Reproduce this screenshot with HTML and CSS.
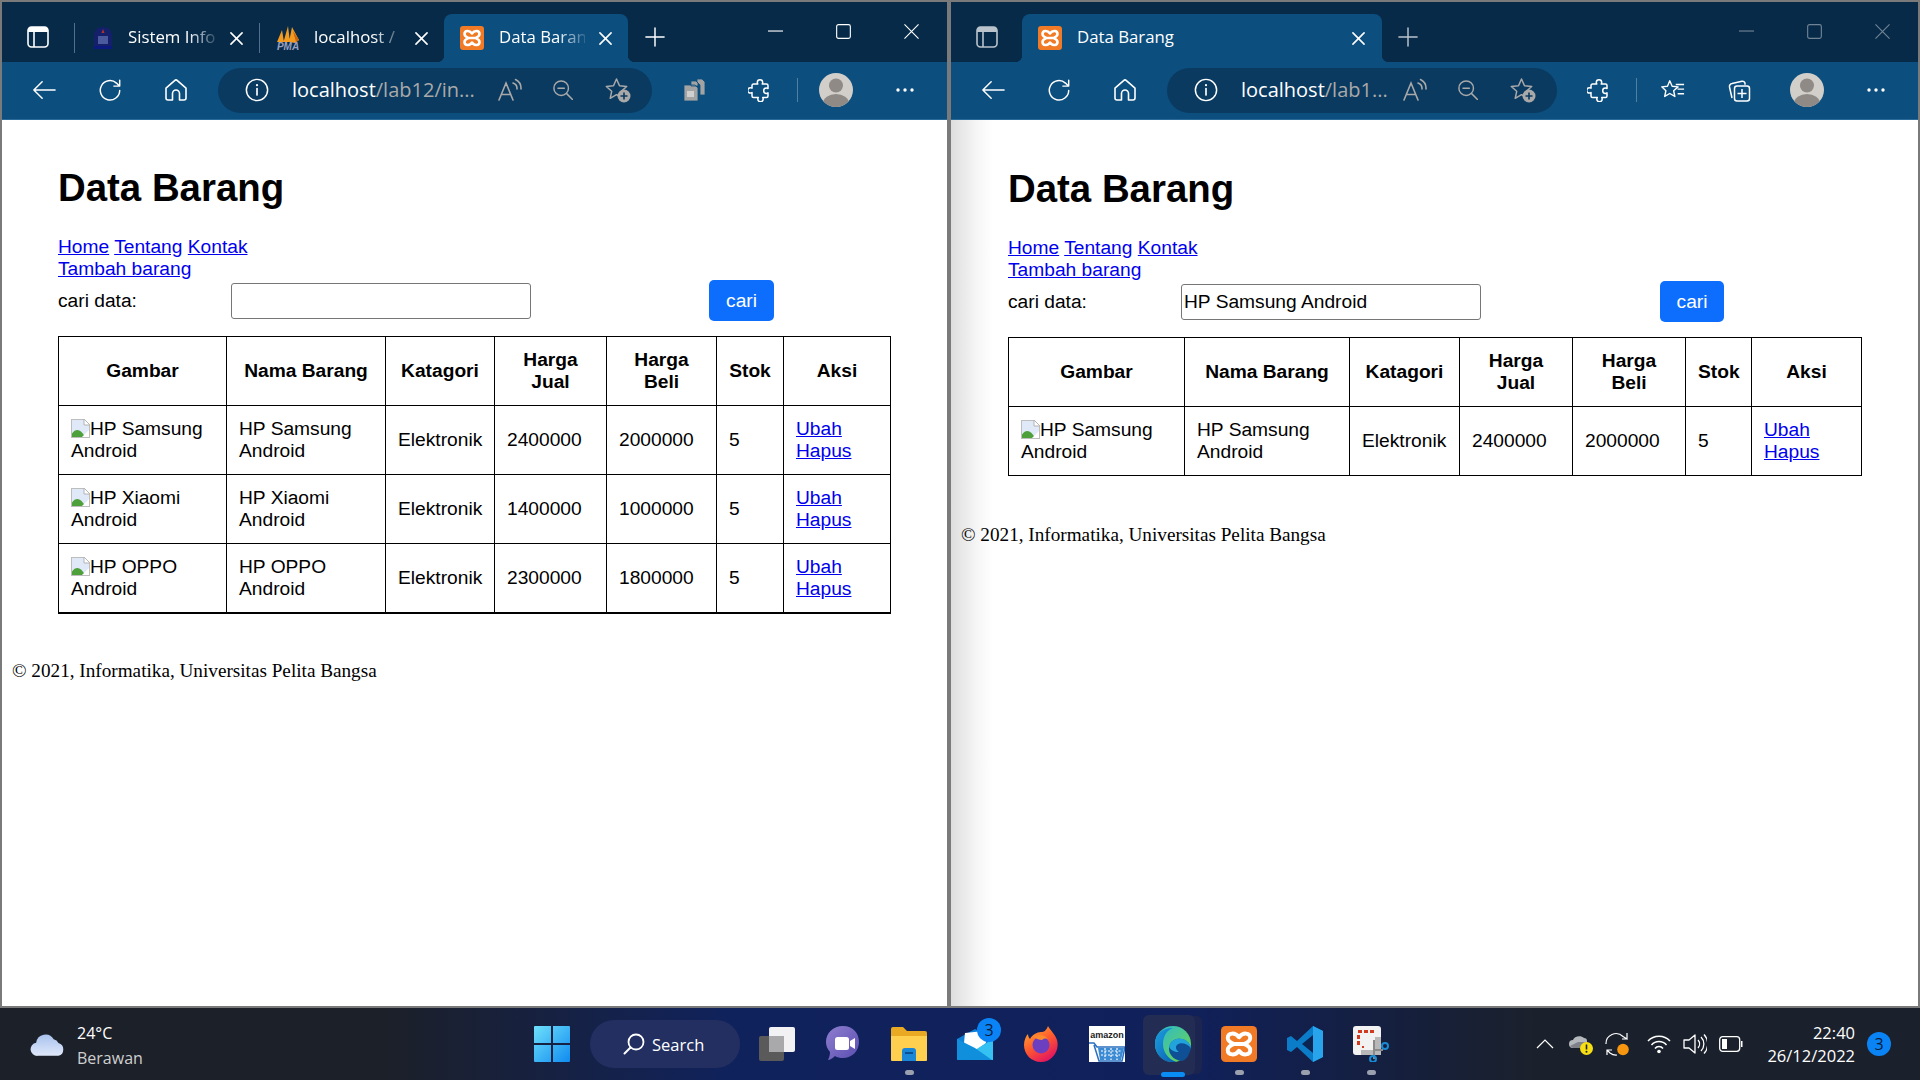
FILE: index.html
```html
<!DOCTYPE html>
<html lang="id">
<head>
<meta charset="utf-8">
<title>Data Barang</title>
<link rel="stylesheet" href="styles.css">
</head>
<body>
<svg class="sprite" aria-hidden="true">
  <symbol id="i-sidebar" viewBox="0 0 22 22"><rect x="1" y="1" width="20" height="20" rx="3.5" fill="none" stroke="currentColor" stroke-width="1.6"/><path d="M1 5a4 4 0 0 1 4-4h12a4 4 0 0 1 4 4v1H1z" fill="currentColor"/><path d="M7 6v15" stroke="currentColor" stroke-width="1.6"/></symbol>
  <symbol id="i-close" viewBox="0 0 14 14"><path d="M1 1l12 12M13 1L1 13" fill="none" stroke="currentColor" stroke-width="1.7" stroke-linecap="round"/></symbol>
  <symbol id="i-plus" viewBox="0 0 22 22"><path d="M11 1v20M1 11h20" fill="none" stroke="currentColor" stroke-width="1.6" stroke-linecap="round"/></symbol>
  <symbol id="i-back" viewBox="0 0 26 24"><path d="M25 12H2M11 3l-9 9 9 9" fill="none" stroke="currentColor" stroke-width="1.6" stroke-linecap="round" stroke-linejoin="round"/></symbol>
  <symbol id="i-reload" viewBox="0 0 26 26"><path d="M23.5 13.5A10.5 10.5 0 1 1 20 5.5L23 8.5M23.5 2.5v6.3h-6.3" fill="none" stroke="currentColor" stroke-width="1.6" stroke-linecap="round" stroke-linejoin="round"/></symbol>
  <symbol id="i-home" viewBox="0 0 24 24"><path d="M2 10.2 10.6 2.6a2 2 0 0 1 2.8 0L22 10.2V20a2 2 0 0 1-2 2h-4.500V15.500a3.500 3.500 0 0 0-7 0V22H4a2 2 0 0 1-2-2z" fill="none" stroke="currentColor" stroke-width="1.6" stroke-linejoin="round"/></symbol>
  <symbol id="i-info" viewBox="0 0 26 26"><circle cx="13" cy="13" r="11.500" fill="none" stroke="currentColor" stroke-width="1.600"/><path d="M13 11.500v7" stroke="currentColor" stroke-width="1.800" stroke-linecap="round"/><circle cx="13" cy="7.800" r="1.200" fill="currentColor"/></symbol>
  <symbol id="i-read" viewBox="0 0 24 24"><path d="M1 22 8 5l7 17M3.500 16.500h9M15 5a6 6 0 0 1 4 6M17.500 1.500A10 10 0 0 1 23 11" fill="none" stroke="currentColor" stroke-width="1.600" stroke-linecap="round"/></symbol>
  <symbol id="i-zoomout" viewBox="0 0 22 22"><circle cx="9" cy="9" r="8" fill="none" stroke="currentColor" stroke-width="1.600"/><path d="M5.500 9h7M15 15l6.500 6.500" fill="none" stroke="currentColor" stroke-width="1.600" stroke-linecap="round"/></symbol>
  <symbol id="i-favadd" viewBox="0 0 26 26"><path d="M11.500 2l3 6.800 7.200.7-5.400 4.800 1.500 7-6.300-3.600-6.300 3.600 1.500-7L1.300 9.500l7.200-.7z" fill="none" stroke="currentColor" stroke-width="1.500" stroke-linejoin="round"/><circle cx="19" cy="19" r="6.500" fill="currentColor"/><path d="M19 15.500v7M15.500 19h7" stroke="#0a3a60" stroke-width="1.600"/></symbol>
  <symbol id="i-puzzle" viewBox="0 0 24 24"><path d="M9.800 6c-.3-.6-.5-1-.5-1.600a2.700 2.700 0 0 1 5.400 0c0 .6-.2 1-.5 1.600h4.300A1.500 1.500 0 0 1 20 7.500v3c-.6-.3-1-.5-1.600-.5a2.700 2.700 0 0 0 0 5.400c.6 0 1-.2 1.600-.5v3a1.500 1.500 0 0 1-1.500 1.500h-3.800c.3.600.5 1 .5 1.600a2.700 2.700 0 0 1-5.400 0c0-.6.2-1 .5-1.600H5.500A1.500 1.500 0 0 1 4 17.900v-3.300c-.6.3-1 .5-1.600.5a2.700 2.700 0 0 1 0-5.400c.6 0 1 .2 1.600.5V7.500A1.500 1.500 0 0 1 5.500 6z" fill="none" stroke="currentColor" stroke-width="1.500" stroke-linejoin="round"/></symbol>
  <symbol id="i-avatar" viewBox="0 0 34 34"><clipPath id="avc"><circle cx="17" cy="17" r="17"/></clipPath><circle cx="17" cy="17" r="17" fill="#d2cfca"/><g clip-path="url(#avc)" fill="#8f8a86"><circle cx="17" cy="12.500" r="7"/><ellipse cx="17" cy="30" rx="13" ry="9"/></g></symbol>
  <symbol id="i-dots" viewBox="0 0 20 6"><circle cx="3" cy="3" r="1.700" fill="currentColor"/><circle cx="10" cy="3" r="1.700" fill="currentColor"/><circle cx="17" cy="3" r="1.700" fill="currentColor"/></symbol>
  <symbol id="i-min" viewBox="0 0 16 16"><path d="M0 7.500h16" stroke="currentColor" stroke-width="1.200"/></symbol>
  <symbol id="i-max" viewBox="0 0 16 16"><rect x=".7" y=".7" width="14.600" height="14.600" rx="2" fill="none" stroke="currentColor" stroke-width="1.200"/></symbol>
  <symbol id="i-x" viewBox="0 0 16 16"><path d="M.5.500l15 15M15.500.500l-15 15" stroke="currentColor" stroke-width="1.200"/></symbol>
  <symbol id="i-xampp" viewBox="0 0 24 24"><rect width="24" height="24" rx="3" fill="#f07a26"/><path d="M12 7.500C9.500 4 4.500 4.300 4.500 8c0 2.400 2.600 3.400 4 4-1.400.6-4 1.600-4 4 0 3.700 5 4 7.500.5C14.500 20 19.500 19.700 19.500 16c0-2.400-2.600-3.400-4-4 1.400-.6 4-1.600 4-4 0-3.700-5-4-7.500-.5zM8.500 12h7" fill="none" stroke="#fff" stroke-width="2.600" stroke-linejoin="round"/></symbol>
  <symbol id="i-broken" viewBox="0 0 19 19"><path d="M0 0h13l6 6v13H0z" fill="#bdbdbd"/><path d="M1 1h11.500L18 6.500V18H1z" fill="#dfe9f8"/><path d="M13 0v6h6z" fill="#fff" stroke="#b5b5b5"/><path d="M1 18v-3.500C5 9 10 10 14 18z" fill="#4da03a"/><path d="M11 18l7-7v7z" fill="#fff"/></symbol>
</svg>

<div class="desktop">

  <section class="win win-left">
    <div class="tabstrip">
      <svg class="sidebar-btn"><use href="#i-sidebar"/></svg>
      <span class="tab-sep"></span>
      <div class="tab tab-one">
        <svg class="fav" viewBox="0 0 24 24"><path d="M12 1c6.500 0 9 4 9 9v12H3V10c0-5 2.500-9 9-9z" fill="#14206a"/><path d="M12 3l1.500 4h-3z" fill="#b3322e"/><path d="M7 10h10v8H7z" fill="#4a5a9c"/><path d="M3 20h18v3H3z" fill="#0c1a80"/></svg>
        <span class="tab-title">Sistem Info</span>
        <svg class="tab-close"><use href="#i-close"/></svg>
      </div>
      <span class="tab-sep"></span>
      <div class="tab tab-two">
        <svg class="fav" viewBox="0 0 24 24"><path d="M1 16 6 4l2 12zM7.500 16 12 0l2 16zM13 16 16 1l7 13-4 3z" fill="#f39a1f"/><path d="M17 5l6 9-3 2z" fill="#c8650f"/><text x="12" y="24" class="pma-text">PMA</text></svg>
        <span class="tab-title">localhost /</span>
        <svg class="tab-close"><use href="#i-close"/></svg>
      </div>
      <div class="tab tab-active">
        <svg class="fav"><use href="#i-xampp"/></svg>
        <span class="tab-title">Data Baran</span>
        <svg class="tab-close"><use href="#i-close"/></svg>
      </div>
      <svg class="new-tab"><use href="#i-plus"/></svg>
      <div class="win-controls">
        <span class="wc"><svg><use href="#i-min"/></svg></span>
        <span class="wc"><svg><use href="#i-max"/></svg></span>
        <span class="wc"><svg><use href="#i-x"/></svg></span>
      </div>
    </div>
    <div class="toolbar">
      <span class="tb"><svg class="i24"><use href="#i-back"/></svg></span>
      <span class="tb"><svg class="i24"><use href="#i-reload"/></svg></span>
      <span class="tb"><svg class="i24"><use href="#i-home"/></svg></span>
      <div class="pill pill-left">
        <svg class="pill-info"><use href="#i-info"/></svg>
        <span class="url"><b>localhost</b>/lab12/in...</span>
        <svg class="pill-read"><use href="#i-read"/></svg>
        <svg class="pill-zoom"><use href="#i-zoomout"/></svg>
        <svg class="pill-fav"><use href="#i-favadd"/></svg>
      </div>
      <span class="tb tb-first"><svg class="i24 grey-ic" viewBox="0 0 24 24"><path d="M9 3h5l2 2v3H9zM15 1h5l3 3v13h-5V7l-3-3zM2 7h11l3 3v13H2z" fill="#a3a3a3" stroke="#0c4e7e" stroke-width=".8"/><path d="M5 13h7v6H5z" fill="#d0d0d0"/></svg></span>
      <span class="tb"><svg class="i24"><use href="#i-puzzle"/></svg></span>
      <span class="tb-sep"></span>
      <span class="tb tb-avatar"><svg class="avatar"><use href="#i-avatar"/></svg></span>
      <span class="tb tb-dots"><svg class="dots"><use href="#i-dots"/></svg></span>
    </div>
    <main class="page">
      <div class="content content-left">
        <h1>Data Barang</h1>
        <nav class="links">
          <a href="#">Home</a> <a href="#">Tentang</a> <a href="#">Kontak</a><br>
          <a href="#">Tambah barang</a>
        </nav>
        <form class="search">
          <label class="search-label">cari data:</label>
          <input class="search-input" type="text" value="">
          <button class="search-btn" type="button">cari</button>
        </form>
        <table class="data">
          <colgroup><col class="l1"><col class="l2"><col class="l3"><col class="l4"><col class="l5"><col class="l6"><col class="l7"></colgroup>
          <thead><tr><th>Gambar</th><th>Nama Barang</th><th>Katagori</th><th>Harga Jual</th><th>Harga Beli</th><th>Stok</th><th>Aksi</th></tr></thead>
          <tbody>
            <tr><td><svg class="broken"><use href="#i-broken"/></svg>HP Samsung Android</td><td>HP Samsung Android</td><td>Elektronik</td><td>2400000</td><td>2000000</td><td>5</td><td><a href="#">Ubah</a><br><a href="#">Hapus</a></td></tr>
            <tr><td><svg class="broken"><use href="#i-broken"/></svg>HP Xiaomi Android</td><td>HP Xiaomi Android</td><td>Elektronik</td><td>1400000</td><td>1000000</td><td>5</td><td><a href="#">Ubah</a><br><a href="#">Hapus</a></td></tr>
            <tr><td><svg class="broken"><use href="#i-broken"/></svg>HP OPPO Android</td><td>HP OPPO Android</td><td>Elektronik</td><td>2300000</td><td>1800000</td><td>5</td><td><a href="#">Ubah</a><br><a href="#">Hapus</a></td></tr>
          </tbody>
        </table>
      </div>
      <footer class="foot foot-left">© 2021, Informatika, Universitas Pelita Bangsa</footer>
    </main>
  </section>

  <section class="win win-right">
    <div class="tabstrip">
      <svg class="sidebar-btn dim"><use href="#i-sidebar"/></svg>
      <div class="tab tab-active tab-wide">
        <svg class="fav"><use href="#i-xampp"/></svg>
        <span class="tab-title">Data Barang</span>
        <svg class="tab-close"><use href="#i-close"/></svg>
      </div>
      <svg class="new-tab dim"><use href="#i-plus"/></svg>
      <div class="win-controls faint">
        <span class="wc"><svg><use href="#i-min"/></svg></span>
        <span class="wc"><svg><use href="#i-max"/></svg></span>
        <span class="wc"><svg><use href="#i-x"/></svg></span>
      </div>
    </div>
    <div class="toolbar">
      <span class="tb"><svg class="i24"><use href="#i-back"/></svg></span>
      <span class="tb"><svg class="i24"><use href="#i-reload"/></svg></span>
      <span class="tb"><svg class="i24"><use href="#i-home"/></svg></span>
      <div class="pill pill-right">
        <svg class="pill-info"><use href="#i-info"/></svg>
        <span class="url"><b>localhost</b>/lab1...</span>
        <svg class="pill-read"><use href="#i-read"/></svg>
        <svg class="pill-zoom"><use href="#i-zoomout"/></svg>
        <svg class="pill-fav"><use href="#i-favadd"/></svg>
      </div>
      <span class="tb tb-first"><svg class="i24"><use href="#i-puzzle"/></svg></span>
      <span class="tb-sep"></span>
      <span class="tb"><svg class="i24" viewBox="0 0 26 24"><path d="M9.500 2l2.600 6 6.400.6-4.800 4.200 1.300 6.200-5.500-3.200L4 19l1.300-6.200L.8 8.600 7 8z" fill="none" stroke="currentColor" stroke-width="1.500" stroke-linejoin="round"/><path d="M16 6h9M18 11h7M18 16h7" stroke="currentColor" stroke-width="1.500"/></svg></span>
      <span class="tb"><svg class="i24" viewBox="0 0 24 24"><path d="M5 20 2.500 9A3 3 0 0 1 5 5.500L15 3.200a2.500 2.500 0 0 1 3 2v1.500" fill="none" stroke="currentColor" stroke-width="1.500"/><rect x="7.500" y="8" width="15" height="15" rx="2.500" fill="none" stroke="currentColor" stroke-width="1.500"/><path d="M15 11v9M10.500 15.500h9" stroke="currentColor" stroke-width="1.500"/></svg></span>
      <span class="tb tb-avatar"><svg class="avatar"><use href="#i-avatar"/></svg></span>
      <span class="tb tb-dots"><svg class="dots"><use href="#i-dots"/></svg></span>
    </div>
    <main class="page page-shadow">
      <div class="content content-right">
        <h1>Data Barang</h1>
        <nav class="links">
          <a href="#">Home</a> <a href="#">Tentang</a> <a href="#">Kontak</a><br>
          <a href="#">Tambah barang</a>
        </nav>
        <form class="search">
          <label class="search-label">cari data:</label>
          <input class="search-input" type="text" value="HP Samsung Android">
          <button class="search-btn" type="button">cari</button>
        </form>
        <table class="data data-right">
          <colgroup><col class="r1"><col class="r2"><col class="r3"><col class="r4"><col class="r5"><col class="r6"><col class="r7"></colgroup>
          <thead><tr><th>Gambar</th><th>Nama Barang</th><th>Katagori</th><th>Harga Jual</th><th>Harga Beli</th><th>Stok</th><th>Aksi</th></tr></thead>
          <tbody>
            <tr><td><svg class="broken"><use href="#i-broken"/></svg>HP Samsung Android</td><td>HP Samsung Android</td><td>Elektronik</td><td>2400000</td><td>2000000</td><td>5</td><td><a href="#">Ubah</a><br><a href="#">Hapus</a></td></tr>
          </tbody>
        </table>
      </div>
      <footer class="foot foot-right">© 2021, Informatika, Universitas Pelita Bangsa</footer>
    </main>
  </section>
</div>

<div class="taskbar">
  <div class="weather">
    <svg class="cloud" viewBox="0 0 38 26"><defs><linearGradient id="cg" x1="0" y1="0" x2="0" y2="1"><stop offset="0" stop-color="#a9c2ee"/><stop offset="1" stop-color="#dfe8f9"/></linearGradient></defs><path d="M8 25a7 7 0 0 1-1.500-13.900A10 10 0 0 1 25 7.500a7 7 0 0 1 5 4A7 7 0 0 1 30 25z" fill="url(#cg)"/></svg>
    <div class="weather-text"><span class="w-temp">24°C</span><span class="w-desc">Berawan</span></div>
  </div>
  <span class="app app-start"><svg class="i36" viewBox="0 0 36 36"><defs><linearGradient id="wg" x1="0" y1="0" x2="1" y2="1"><stop offset="0" stop-color="#6fe0fb"/><stop offset="1" stop-color="#0f8bf0"/></linearGradient></defs><path d="M0 1a1 1 0 0 1 1-1h16v17H0zM19 0h16a1 1 0 0 1 1 1v16H19zM0 19h17v17H1a1 1 0 0 1-1-1zM19 19h17v16a1 1 0 0 1-1 1H19z" fill="url(#wg)"/></svg></span>
  <div class="search-pill">
    <svg class="s-ic" viewBox="0 0 22 22"><circle cx="13" cy="9" r="7.500" fill="none" stroke="#fff" stroke-width="1.800"/><path d="M7.500 14.500 1.500 20.500" stroke="#fff" stroke-width="2" stroke-linecap="round"/></svg>
    <span>Search</span>
  </div>
  <div class="apps">
    <span class="app"><svg class="i36" viewBox="0 0 36 36"><rect x="0" y="10" width="25" height="25" rx="2" fill="#5a5a5a"/><rect x="10" y="1" width="26" height="25" rx="2" fill="#f2f2f4"/><rect x="10" y="10" width="15" height="16" fill="#a9a9ab"/></svg></span>
    <span class="app"><svg class="i36" viewBox="0 0 36 36"><defs><linearGradient id="tg" x1="0" y1="0" x2="1" y2="1"><stop offset="0" stop-color="#8f7fd0"/><stop offset="1" stop-color="#5a4db0"/></linearGradient></defs><path d="M18 0c10 0 16 7 16 16s-7 16-16 16c-3 0-6-.5-8-2-2 2-5 4-7 4 1-2 2-5 2-8-3-3-4-7-4-10C1 7 8 0 18 0z" fill="url(#tg)"/><rect x="10" y="11" width="14" height="13" rx="2.500" fill="#fff"/><path d="M25 15l5-3v11l-5-3z" fill="#fff"/></svg></span>
    <span class="app has-dot"><svg class="i36" viewBox="0 0 36 36"><path d="M0 3a2 2 0 0 1 2-2h10l4 4h18a2 2 0 0 1 2 2v6H0z" fill="#eaa922"/><path d="M0 10h36v24a1 1 0 0 1-1 1H1a1 1 0 0 1-1-1z" fill="#ffd04f"/><path d="M11 25a3 3 0 0 1 3-3h8a3 3 0 0 1 3 3v10H11z" fill="#1a86d8"/><path d="M14 27h8" stroke="#0b4f91" stroke-width="2"/></svg></span>
    <span class="app app-mail"><svg class="i36" viewBox="0 0 36 32"><path d="M0 11 18 1l18 10v20a1 1 0 0 1-1 1H1a1 1 0 0 1-1-1z" fill="#0f7fd4"/><path d="M8 5 27 3l2 12-11 8L7 15z" fill="#fff"/><path d="M36 11v21H20L0 11l18 11z" fill="#35c1f1"/><path d="M0 11v20a1 1 0 0 0 1 1h34L18 20z" fill="#1090dc"/></svg><span class="badge">3</span></span>
    <span class="app"><svg class="i36" viewBox="0 0 36 36"><defs><linearGradient id="ff" x1="0" y1="0" x2=".6" y2="1"><stop offset="0" stop-color="#ffb92e"/><stop offset=".55" stop-color="#ff5a2e"/><stop offset="1" stop-color="#e3185f"/></linearGradient></defs><path d="M25 0c2 4 7 8 9 14 3 11-5 22-16 22C8 36 1 28 1 19c0-5 2-9 4-11 0 2 1 4 2 5 2-4 7-7 11-7 3 0 5-1 7-6z" fill="url(#ff)"/><circle cx="18" cy="19" r="8.500" fill="#6b3fc0"/><path d="M10 11c4-3 12-3 15 2-3-1-5 0-6 1 -3 0-5-1-9-3z" fill="#ff8a2e"/></svg></span>
    <span class="app"><div class="amazon"><span class="amz-word">amazon</span><svg class="amz-cart" viewBox="0 0 36 20"><path d="M0 1h5l3 4h28l-3 14H10L5 3" fill="none" stroke="#2a6fc0" stroke-width="1.500"/><path d="M9 6h26l-3 12H11z" fill="#3b8ad4"/><path d="M12 9h20M12 13h19M16 6v12M22 6v12M28 6v12" stroke="#fff" stroke-width="1.200" stroke-dasharray="2 1.500"/></svg></div></span>
    <span class="app app-edge"><svg class="i36" viewBox="0 0 36 36"><defs><linearGradient id="eg1" x1="0" y1="0" x2="1" y2="1"><stop offset="0" stop-color="#2ab7d8"/><stop offset="1" stop-color="#6fd93f"/></linearGradient><linearGradient id="eg2" x1="0" y1="0" x2="1" y2="1"><stop offset="0" stop-color="#1a9fe0"/><stop offset="1" stop-color="#0c5fb0"/></linearGradient></defs><circle cx="18" cy="18" r="18" fill="url(#eg1)"/><path d="M0 18C0 7 8 2 18 2c-6 2-10 8-10 16 0 8 5 15 13 17.700C9 38 0 29 0 18z" fill="url(#eg2)"/><path d="M36 22C34 15 28 12 22 13c-5 1-8 5-8 10 0 7 7 12 13 12 4-1 7-5 9-13z" fill="#0e4f96"/><path d="M14 20c2-6 8-9 14-7 5 2 8 5 8 9-4-5-11-6-14-3-2 2-1 5 2 7-5 0-9-2-10-6z" fill="#22a3dc"/></svg><span class="run-bar"></span></span>
    <span class="app has-dot"><svg class="i36"><use href="#i-xampp"/></svg></span>
    <span class="app has-dot"><svg class="i36" viewBox="0 0 36 36"><path d="M26 0l10 5v26l-10 5L10 21l-6 5-4-2V12l4-2 6 5z" fill="#0a7cc8"/><path d="M26 0l10 5v26l-10 5z" fill="#27a4ec"/><path d="M26 9 15 18l11 9z" fill="#0b2452"/></svg></span>
    <span class="app has-dot"><svg class="i36" viewBox="0 0 36 36"><rect x="0" y="0" width="28" height="29" rx="3" fill="#f2f2f2"/><path d="M5 4h4v3H5zM11 4h4v3h-4zM17 4h4v3h-4zM4 9h3v4H4zM4 15h3v4H4zM9 20h2v2H9z" fill="#d03a20"/><path d="M22 11v13H8v5h20V11z" fill="#b8b8b8"/><path d="M21 14v19" stroke="#8a8a8a" stroke-width="2"/><circle cx="20" cy="33" r="3" fill="none" stroke="#1a8ad4" stroke-width="2"/><circle cx="32" cy="20" r="3" fill="none" stroke="#1a8ad4" stroke-width="2"/><path d="M20 24h10" stroke="#8a8a8a" stroke-width="2"/></svg></span>
  </div>
  <div class="tray">
    <span class="tr"><svg class="i18" viewBox="0 0 18 10"><path d="M1 9l8-8 8 8" fill="none" stroke="#fff" stroke-width="1.200"/></svg></span>
    <span class="tr"><svg class="i24" viewBox="0 0 24 24"><path d="M4 16a4 4 0 0 1 0-8c1-4 8-5 11-2 2 0 3 1 3 3v7z" fill="#b4b7bc"/><path d="M1 14l8-4 9 0v6H4z" fill="#7f8288"/><circle cx="17.500" cy="16.500" r="6.500" fill="#f7df14"/><path d="M17.500 12.500v5" stroke="#222" stroke-width="1.600"/><circle cx="17.500" cy="19.800" r="1" fill="#222"/></svg></span>
    <span class="tr"><svg class="i24" viewBox="0 0 24 24"><path d="M1 12A10 10 0 0 1 18 4.500L22 7V1M22 7h-5M2 23v-5h5M2 18l3 3a10 10 0 0 0 7 2" fill="none" stroke="#fff" stroke-width="1.200"/><circle cx="18" cy="17.500" r="5.800" fill="#f8960f"/></svg></span>
    <span class="tr tr-gap"><svg class="i24" viewBox="0 0 24 20"><path d="M1 7a15 15 0 0 1 22 0M4.500 11a10 10 0 0 1 15 0M8 14.500a5 5 0 0 1 8 0" fill="none" stroke="#fff" stroke-width="1.500"/><circle cx="12" cy="17.500" r="1.800" fill="#fff"/></svg></span>
    <span class="tr"><svg class="i24" viewBox="0 0 24 22"><path d="M1 7h5l6-5v18l-6-5H1z" fill="none" stroke="#fff" stroke-width="1.300" stroke-linejoin="round"/><path d="M15 7a6 6 0 0 1 0 8M18 4a10 10 0 0 1 0 14M21 1.500a14 14 0 0 1 0 19" fill="none" stroke="#fff" stroke-width="1.300"/></svg></span>
    <span class="tr"><svg class="i24" viewBox="0 0 24 16"><rect x=".7" y=".7" width="20" height="14.600" rx="3" fill="none" stroke="#fff" stroke-width="1.300"/><rect x="3" y="3" width="5" height="10" fill="#fff"/><path d="M22 5h1.500v6H22z" fill="#fff"/></svg></span>
    <div class="clock"><span>22:40</span><span>26/12/2022</span></div>
    <span class="notif">3</span>
  </div>
</div>
</body>
</html>
```

FILE: styles.css
```css
* { box-sizing: border-box; }
html, body { margin: 0; padding: 0; height: 100%; overflow: hidden; }
body {
  width: 1920px;
  height: 1080px;
  display: flex;
  flex-direction: column;
  background: #7a7a7a;
  font-family: "Liberation Sans", Arial, sans-serif;
}
.sprite { position: absolute; width: 0; height: 0; }

.desktop { height: 1008px; display: flex; padding-bottom: 2px; background: #7a7a7a; }
.win { display: flex; flex-direction: column; border-top: 2px solid #7a7a7a; }
.win-left { width: 951px; border-left: 2px solid #7a7a7a; border-right: 4px solid #7a7a7a; }
.win-right { flex: 1; border-right: 2px solid #7a7a7a; }

/* tab strip */
.tabstrip {
  height: 60px;
  flex: none;
  display: flex;
  align-items: flex-end;
  background: #072a48;
  color: #fff;
  font-family: "Open Sans", "Noto Sans", sans-serif;
}
.sidebar-btn { width: 22px; height: 22px; margin: 0 1px 14px 25px; flex: none; color: #fff; }
.win-right .sidebar-btn { margin-left: 25px; margin-right: 24px; }
.dim { opacity: .72; }
.tab-sep { width: 1px; height: 30px; margin: 0 0 9px 0; background: #52708a; flex: none; }
.sidebar-btn + .tab-sep { margin-left: 24px; }
.tab {
  position: relative;
  width: 184px;
  height: 48px;
  flex: none;
  display: flex;
  align-items: center;
  padding: 0 16px;
  border-radius: 8px 8px 0 0;
}
.tab-active { background: #0c4e7e; }
.tab-active::before, .tab-active::after {
  content: "";
  position: absolute;
  bottom: 0;
  width: 7px;
  height: 7px;
}
.tab-active::before { left: -7px; background: radial-gradient(circle at 0 0, transparent 7px, #0c4e7e 7.5px); }
.tab-active::after { right: -7px; background: radial-gradient(circle at 100% 0, transparent 7px, #0c4e7e 7.5px); }
.tab-wide { width: 360px; padding-right: 17px; }
.fav { width: 24px; height: 24px; flex: none; }
.tab-title {
  flex: 1;
  min-width: 0;
  margin: 0 14px 2px 15px;
  font-size: 16.8px;
  line-height: 24px;
  white-space: nowrap;
  -webkit-mask-image: linear-gradient(90deg, #000 68%, rgba(0,0,0,.15) 100%);
  mask-image: linear-gradient(90deg, #000 68%, rgba(0,0,0,.15) 100%);
}
.tab-one .tab-title { margin-left: 13px; }
.tab-two .tab-title { margin-left: 14px; }
.tab-wide .tab-title { -webkit-mask-image: none; mask-image: none; }
.pma-text { font: italic bold 10px "Liberation Sans", sans-serif; fill: #9aa0c0; text-anchor: middle; }
.tab-close { width: 13px; height: 13px; flex: none; color: #fff; }
.new-tab { width: 20px; height: 20px; margin: 0 17px 15px 17px; flex: none; color: #fff; }
.win-right .new-tab { margin-left: 16px; }
.win-controls { margin-left: auto; margin-right: 2px; align-self: flex-start; height: 58px; display: flex; color: #fff; }
.faint { opacity: .42; }
.wc { width: 68px; height: 58px; display: flex; align-items: center; justify-content: center; }
.wc svg { width: 15px; height: 15px; }

/* toolbar */
.toolbar {
  height: 58px;
  flex: none;
  display: flex;
  align-items: center;
  padding-left: 9px;
  background: #0c4e7e;
  border-bottom: 1px solid #2a6a98;
  color: #fff;
}
.toolbar svg { margin-bottom: 2px; }
.tb { width: 66px; height: 40px; flex: none; display: flex; align-items: center; justify-content: center; }
.i24 { width: 24px; height: 24px; flex: none; }
.i36 { width: 36px; height: 36px; flex: none; }
.i18 { width: 18px; height: 10px; flex: none; }
.tb-first { margin-left: 9px; }
.tb-sep { width: 8px; height: 24px; flex: none; position: relative; }
.tb-sep::before { content: ""; position: absolute; left: 4px; top: -1px; width: 1px; height: 24px; background: #4f80a4; }
.tb-avatar { margin-left: 2px; }
.tb-dots { margin-left: 3px; }
.avatar { width: 34px; height: 34px; }
.dots { width: 20px; height: 6px; }
.pill {
  height: 45px;
  margin-left: 9px;
  flex: none;
  display: flex;
  align-items: center;
  background: #0a3a60;
  border-radius: 23px;
  color: #a9a9a9;
  font-family: "Open Sans", "Noto Sans", sans-serif;
}
.pill-left { width: 434px; }
.pill-right { width: 390px; }
.pill-info { width: 24px; height: 24px; margin-left: 27px; color: #fff; flex: none; }
.url { margin: 0 0 2px 23px; font-size: 20px; white-space: nowrap; flex: 1; min-width: 0; }
.url b { font-weight: 400; color: #fff; }
.pill-read { width: 24px; height: 24px; flex: none; }
.pill-zoom { width: 20px; height: 20px; margin-left: 31px; flex: none; }
.pill-fav { width: 26px; height: 26px; margin: 0 21px 2px 32px; flex: none; }

/* page */
.page { flex: 1; background: #fff; color: #000; font-size: 19.2px; line-height: 22px; }
.page-shadow { background: linear-gradient(90deg, #dedede 0, #f6f6f6 26px, #fff 42px); }
.content { padding-top: 46px; }
.content-left { margin-left: 56px; width: 833px; }
.content-right { margin-left: 57px; width: 854px; padding-top: 47px; }
h1 { margin: 0 0 27px; font-size: 38.4px; line-height: 43px; font-weight: 700; }
.links a, .data a { color: #00e; }
.search { display: flex; align-items: center; margin: 0 0 15px; height: 41px; }
.search-label { width: 173px; flex: none; }
.search-input {
  width: 300px;
  height: 36px;
  flex: none;
  padding: 0 2px;
  border: 1px solid #767676;
  border-radius: 3px;
  background: #fff;
  color: #000;
  font: 19.2px "Liberation Sans", Arial, sans-serif;
}
.search-btn {
  width: 65px;
  height: 41px;
  flex: none;
  margin-left: 178px;
  padding: 0;
  border: 0;
  border-radius: 5px;
  background: #0d6efd;
  color: #fff;
  font: 19.2px "Liberation Sans", Arial, sans-serif;
}
.content-right .search-btn { width: 64px; margin-left: 179px; }
.data { width: 100%; table-layout: fixed; border-collapse: collapse; }
.data th, .data td { padding: 12px; border: 1px solid #000; vertical-align: middle; text-align: left; }
.data th { text-align: center; font-weight: 700; }
.data:not(.data-right) tbody tr:last-child td { border-bottom-width: 2px; }
.l1 { width: 168px; } .l2 { width: 159px; } .l3 { width: 109px; } .l4 { width: 112px; } .l5 { width: 110px; } .l6 { width: 67px; } .l7 { width: 107px; }
.r1 { width: 176px; } .r2 { width: 165px; } .r3 { width: 110px; } .r4 { width: 113px; } .r5 { width: 113px; } .r6 { width: 66px; } .r7 { width: 110px; }
.broken { width: 19px; height: 19px; vertical-align: -3px; }
.foot { padding-left: 10px; font-family: "Liberation Serif", "Times New Roman", serif; }
.foot-left { margin-top: 46px; }
.foot-right { margin-top: 48px; }

/* taskbar */
.taskbar {
  height: 72px;
  flex: none;
  display: flex;
  align-items: center;
  background: linear-gradient(90deg, #1c2029 0, #1c2029 20%, #10225c 38%, #10205a 62%, #161f3a 74%, #1b212c 80%, #1b212c 100%);
  color: #fff;
  font-family: "Open Sans", "Noto Sans", sans-serif;
}
.weather { width: 519px; flex: none; display: flex; align-items: center; padding-left: 30px; }
.cloud { width: 36px; height: 25px; flex: none; }
.weather-text { display: flex; flex-direction: column; margin: 4px 0 0 11px; font-size: 16px; line-height: 25px; }
.w-temp { color: #fff; }
.w-desc { color: #cfcfcf; }
.app { position: relative; width: 66px; height: 72px; flex: none; display: flex; align-items: center; justify-content: center; }
.search-pill {
  width: 150px;
  height: 48px;
  margin: 0 4px 0 5px;
  flex: none;
  display: flex;
  align-items: center;
  padding-left: 33px;
  border-radius: 24px;
  background: #222f60;
  font-size: 16.5px;
}
.s-ic { width: 22px; height: 22px; margin-right: 7px; flex: none; }
.apps { display: flex; flex: none; }
.has-dot::after {
  content: "";
  position: absolute;
  left: 29px;
  bottom: 5px;
  width: 9px;
  height: 5px;
  border-radius: 3px;
  background: #9aa0ae;
}
.badge {
  position: absolute;
  left: 35px;
  top: 10px;
  width: 24px;
  height: 24px;
  border-radius: 50%;
  background: #0a84f5;
  color: #0b1a3a;
  font-size: 16px;
  line-height: 24px;
  text-align: center;
}
.amazon {
  width: 36px;
  height: 36px;
  background: #fff;
  display: flex;
  flex-direction: column;
  align-items: center;
  justify-content: space-between;
  overflow: hidden;
}
.amz-word { font: 700 9px/12px "Liberation Sans", sans-serif; color: #222; margin-top: 3px; }
.amz-cart { width: 36px; height: 20px; }
.app-edge::before {
  content: "";
  position: absolute;
  left: 3px;
  top: 7px;
  width: 52px;
  height: 60px;
  border-radius: 6px;
  background: #232c52;
  box-shadow: 8px 0 0 -1px #1b2550;
}
.app-edge svg { position: relative; }
.run-bar { position: absolute; left: 21px; bottom: 3px; width: 24px; height: 5px; border-radius: 3px; background: #0a8cf5; }
.tray { display: flex; align-items: center; flex: none; margin-left: 123px; }
.tr { width: 36px; height: 40px; flex: none; display: flex; align-items: center; justify-content: center; }
.tr-gap { margin-left: 6px; }
.clock { width: 106px; flex: none; display: flex; flex-direction: column; align-items: flex-end; font-size: 16.5px; line-height: 23px; }
.notif {
  width: 24px;
  height: 24px;
  margin-left: 12px;
  flex: none;
  border-radius: 50%;
  background: #0a84f5;
  color: #0b1a3a;
  font-size: 16px;
  line-height: 24px;
  text-align: center;
}
```
